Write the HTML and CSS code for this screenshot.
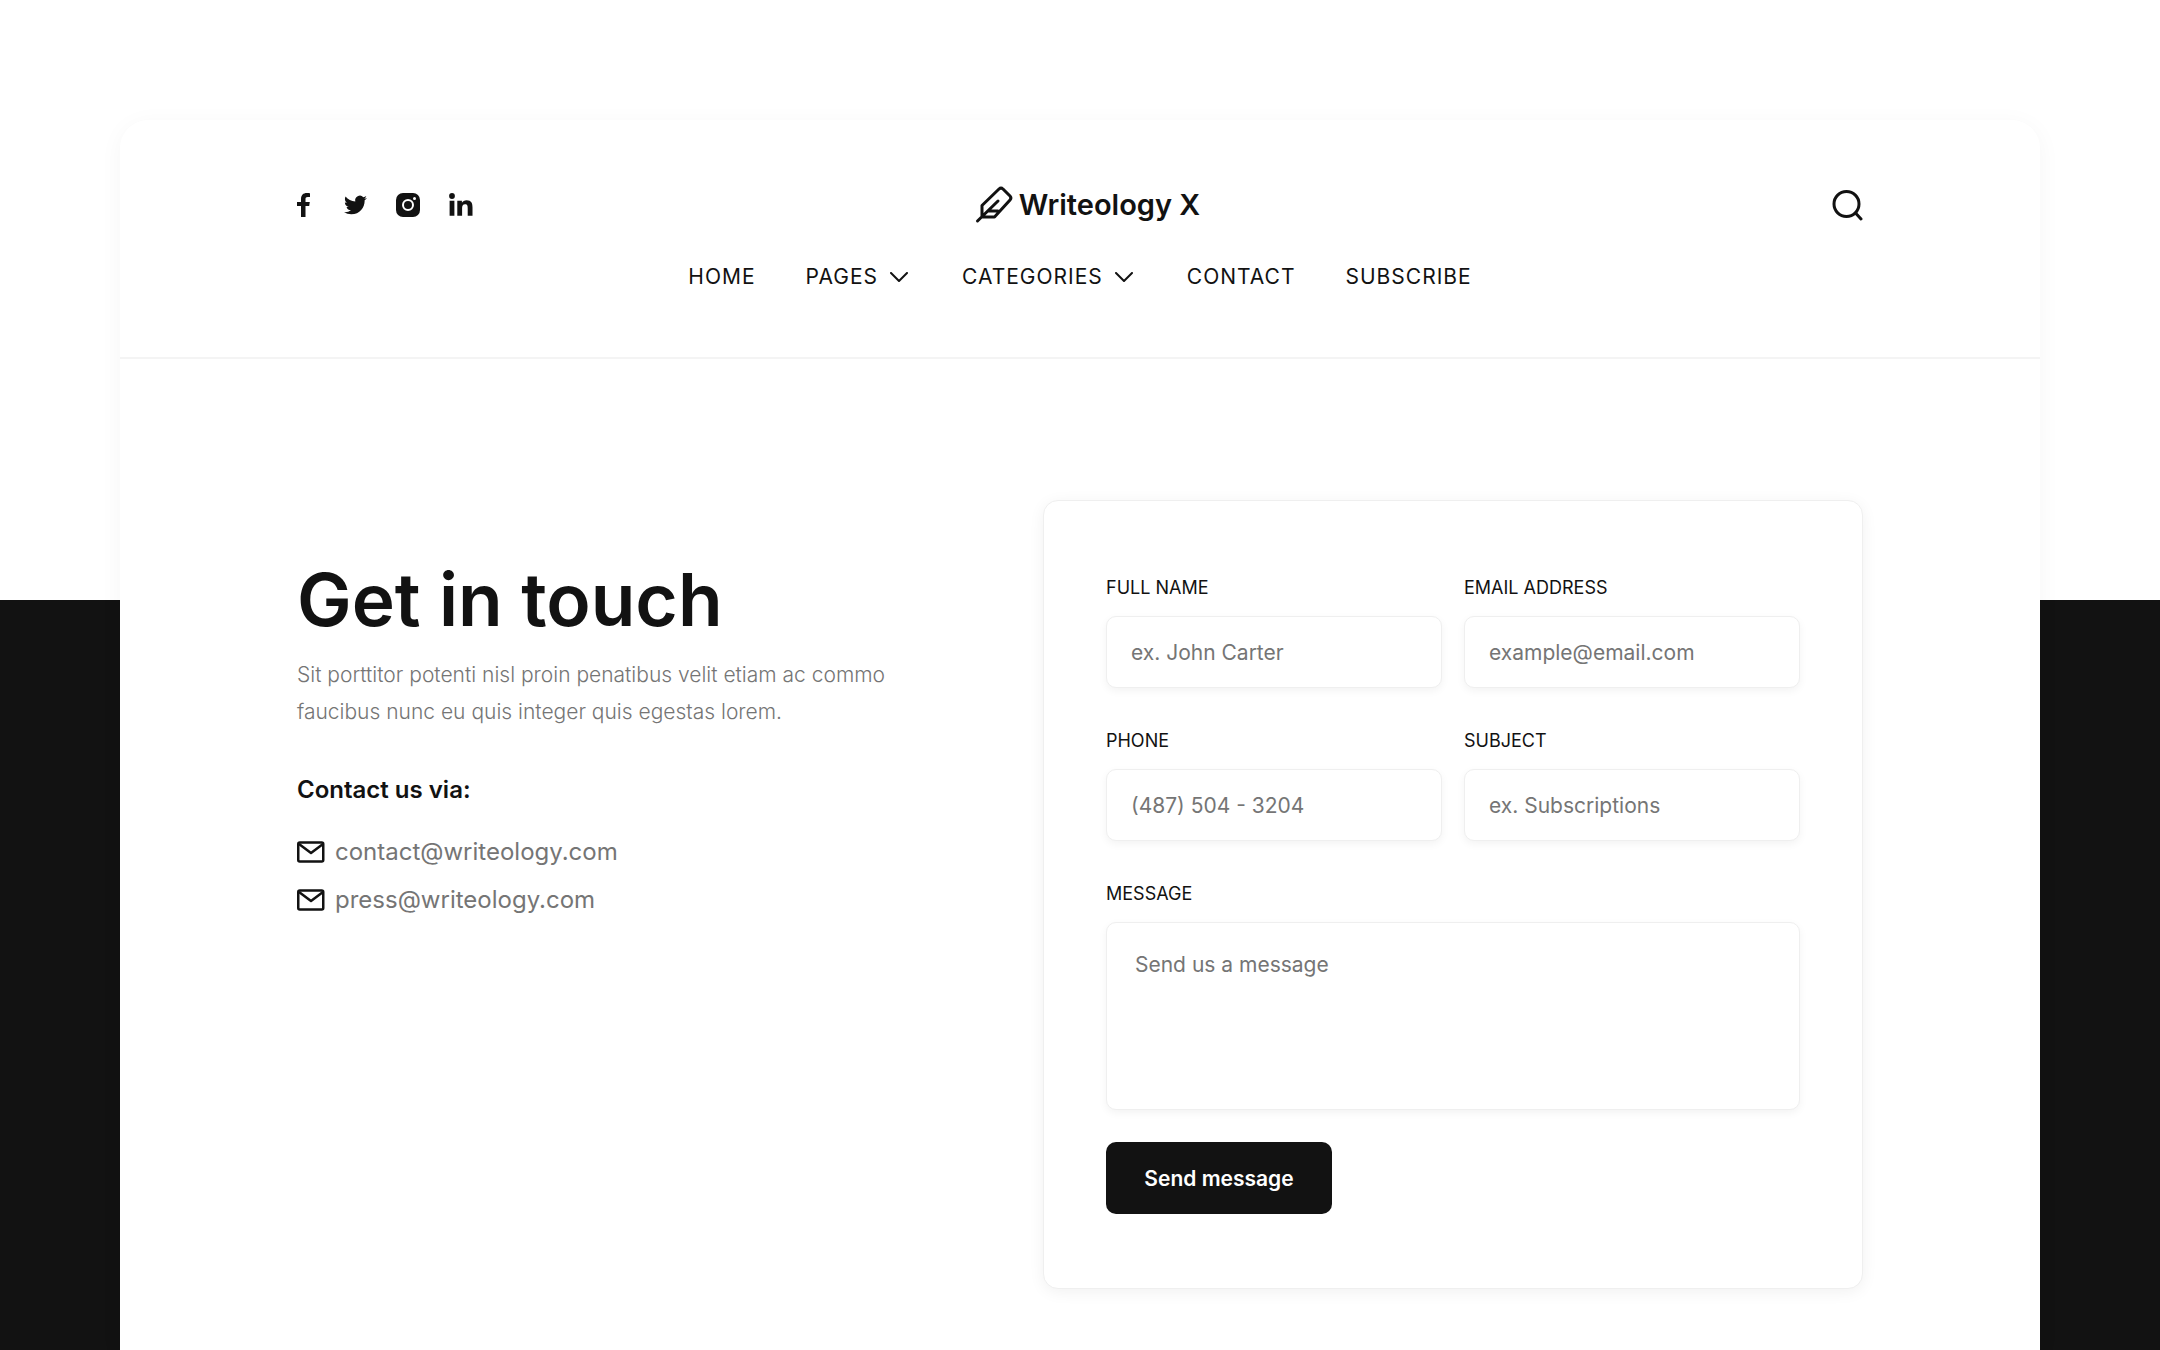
FILE: index.html
```html
<!DOCTYPE html>
<html lang="en">
  <head>
    <meta charset="UTF-8" />
    <meta name="viewport" content="width=device-width, initial-scale=1.0" />
    <title>Contact - Writeology X</title>
    <link rel="stylesheet" href="styles.css">
  </head>
  <body>
    <div class="page">
      <header class="header">
        <div class="header-top">
          <div class="social">
            <a href="#" aria-label="Facebook">
              <svg width="18" height="24" viewBox="0 0 18 24" fill="currentColor"><path d="M4 24V13H0V9h4V6.200C4 2 6.300 0 9.800 0c1.500 0 2.800.1 3.200.2v3.700h-2.200C9 3.900 8.500 4.700 8.500 6v3h4.300l-.6 4H8.500v11z"/></svg>
            </a>
            <a href="#" aria-label="Twitter">
              <svg width="23" height="24" viewBox="0 0 24 24" fill="currentColor"><path d="M23.950 4.570a10 10 0 0 1-2.820.78 4.960 4.960 0 0 0 2.160-2.730c-.95.56-2 .96-3.130 1.190a4.920 4.920 0 0 0-8.380 4.480C7.690 8.100 4.070 6.130 1.640 3.160a4.820 4.820 0 0 0-.67 2.480c0 1.710.87 3.210 2.190 4.100a4.900 4.900 0 0 1-2.230-.62v.06a4.920 4.920 0 0 0 3.950 4.830 5 5 0 0 1-2.210.08 4.940 4.940 0 0 0 4.600 3.420A9.870 9.870 0 0 1 0 19.540a13.990 13.990 0 0 0 7.550 2.210c9.050 0 14-7.500 14-13.980 0-.21 0-.42-.02-.63a9.940 9.940 0 0 0 2.420-2.570z"/></svg>
            </a>
            <a href="#" aria-label="Instagram">
              <svg width="24" height="24" viewBox="0 0 24 24"><rect width="24" height="24" rx="7" fill="currentColor"/><circle cx="12" cy="12" r="5" fill="none" stroke="#fff" stroke-width="2"/><circle cx="18.500" cy="5.500" r="1.500" fill="#fff"/></svg>
            </a>
            <a href="#" aria-label="LinkedIn">
              <svg width="24" height="24" viewBox="0 0 24 24" fill="currentColor"><circle cx="3" cy="3" r="2.900"/><path d="M.6 7.700h4.800v15H.6zM8.300 7.700h4.600v2.100c.9-1.500 2.500-2.500 4.700-2.500 4.800 0 5.900 3 5.900 7.200v8.200h-4.800v-7.300c0-2-.1-4.100-2.600-4.100s-3 1.900-3 4v7.400H8.300z"/></svg>
            </a>
          </div>
          <a href="#" class="logo">
            <svg width="40" height="40" viewBox="0 0 40 40" fill="none" stroke="currentColor" stroke-width="3" stroke-linecap="round" stroke-linejoin="round"><path d="M7 32V20.500L24 4q2-1.800 4 0l7 7q1.800 2 0 4L19.500 32zM2.500 36 23 16M13 26h10"/></svg>
            <span>Writeology X</span>
          </a>
          <button type="button" class="search-btn" aria-label="Search">
            <svg width="32" height="32" viewBox="0 0 32 32" fill="none" stroke="currentColor" stroke-width="3" stroke-linecap="round"><circle cx="15.500" cy="15" r="12.500"/><path d="m24.500 24 5.500 6"/></svg>
          </button>
        </div>
        <nav class="nav">
          <a href="#">HOME</a>
          <a href="#">PAGES
            <svg width="18" height="10" viewBox="0 0 18 10" fill="none" stroke="currentColor" stroke-width="2" stroke-linecap="round" stroke-linejoin="round"><path d="m1 1 8 8 8-8"/></svg>
          </a>
          <a href="#">CATEGORIES
            <svg width="18" height="10" viewBox="0 0 18 10" fill="none" stroke="currentColor" stroke-width="2" stroke-linecap="round" stroke-linejoin="round"><path d="m1 1 8 8 8-8"/></svg>
          </a>
          <a href="#">CONTACT</a>
          <a href="#">SUBSCRIBE</a>
        </nav>
      </header>
      <main class="contact">
        <section class="intro">
          <h1>Get in touch</h1>
          <p>Sit porttitor potenti nisl proin penatibus velit etiam ac commo<br>faucibus nunc eu quis integer quis egestas lorem.</p>
          <h2>Contact us via:</h2>
          <ul class="mails">
            <li>
              <a href="mailto:contact@writeology.com">
                <svg width="28" height="22" viewBox="0 0 28 22" fill="none" stroke="currentColor" stroke-width="2.500" stroke-linejoin="round"><rect x="1.250" y="1.500" width="25" height="19" rx="1.500"/><path d="m2 3 12 9 12-9"/></svg>
                contact@writeology.com
              </a>
            </li>
            <li>
              <a href="mailto:press@writeology.com">
                <svg width="28" height="22" viewBox="0 0 28 22" fill="none" stroke="currentColor" stroke-width="2.500" stroke-linejoin="round"><rect x="1.250" y="1.500" width="25" height="19" rx="1.500"/><path d="m2 3 12 9 12-9"/></svg>
                press@writeology.com
              </a>
            </li>
          </ul>
        </section>
        <form class="contact-form">
          <div class="field">
            <label for="fullname">FULL NAME</label>
            <input type="text" id="fullname" placeholder="ex. John Carter" />
          </div>
          <div class="field">
            <label for="email">EMAIL ADDRESS</label>
            <input type="email" id="email" placeholder="example@email.com" />
          </div>
          <div class="field">
            <label for="phone">PHONE</label>
            <input type="tel" id="phone" placeholder="(487) 504 - 3204" />
          </div>
          <div class="field">
            <label for="subject">SUBJECT</label>
            <input type="text" id="subject" placeholder="ex. Subscriptions" />
          </div>
          <div class="field wide">
            <label for="message">MESSAGE</label>
            <textarea id="message" placeholder="Send us a message"></textarea>
          </div>
          <button type="submit" class="send-btn">Send message</button>
        </form>
      </main>
    </div>
  </body>
</html>
```
FILE: styles.css
```css
* {
  box-sizing: border-box;
}

body {
  margin: 0;
  padding: 120px 120px 0;
  min-height: 100vh;
  font-family: Inter, "Open Sans", sans-serif;
  color: #121212;
  background: linear-gradient(#fff 600px, #121212 600px);
}

a {
  color: inherit;
  text-decoration: none;
}

svg {
  display: block;
  flex-shrink: 0;
}

.page {
  min-height: calc(100vh - 120px);
  background-color: #fff;
  border-radius: 28px 28px 0 0;
  box-shadow: 0 4px 24px rgba(0, 0, 0, 0.04);
}

.header {
  padding: 65px 177px 64px;
  border-bottom: 2px solid #f4f4f4;
}

.header-top {
  display: grid;
  grid-template-columns: 1fr auto 1fr;
  align-items: center;
}

.social {
  display: flex;
  align-items: center;
  gap: 29px;
}

.logo {
  display: flex;
  align-items: center;
  gap: 4px;
  padding-left: 15px;
  font-size: 29px;
  line-height: 40px;
  font-weight: 600;
}

.search-btn {
  justify-self: end;
  padding: 0;
  border: none;
  background: none;
  color: inherit;
  cursor: pointer;
}

.nav {
  display: flex;
  justify-content: center;
  gap: 50px;
  margin-top: 36px;
  font-size: 21px;
  line-height: 32px;
  letter-spacing: 1px;
}

.nav a {
  display: flex;
  align-items: center;
  gap: 12px;
}

.nav svg {
  margin-right: 4px;
}

.contact {
  display: flex;
  justify-content: space-between;
  align-items: flex-start;
  gap: 60px;
  padding: 141px 177px 62px;
}

.intro {
  padding-top: 56px;
}

h1 {
  margin: 0 0 12px;
  font-size: 73px;
  line-height: 88px;
  font-weight: 600;
}

.intro p {
  margin: 0 0 44px;
  font-size: 21px;
  line-height: 37px;
  font-weight: 300;
  color: #757575;
}

h2 {
  margin: 0 0 22px;
  font-size: 24px;
  line-height: 32px;
  font-weight: 600;
}

.mails {
  margin: 0;
  padding: 0;
  list-style: none;
}

.mails a {
  display: flex;
  align-items: center;
  gap: 10px;
  font-size: 24px;
  line-height: 48px;
  color: #757575;
}

.mails svg {
  color: #121212;
}

.contact-form {
  display: grid;
  grid-template-columns: 1fr 1fr;
  gap: 32px 22px;
  width: 820px;
  padding: 66px 62px 74px;
  border: 1px solid #efefef;
  border-radius: 15px;
  background-color: #fff;
  box-shadow: 0 3px 16px rgba(0, 0, 0, 0.06);
}

.wide {
  grid-column: 1 / -1;
}

label {
  display: block;
  margin-bottom: 8px;
  font-size: 18px;
  line-height: 41px;
}

input,
textarea {
  display: block;
  width: 100%;
  padding: 0 24px;
  border: 1px solid #efefef;
  border-radius: 10px;
  background-color: #fff;
  box-shadow: 0 3px 8px rgba(0, 0, 0, 0.05);
  color: #121212;
  font-family: inherit;
  font-size: 21px;
}

input {
  height: 72px;
}

textarea {
  height: 188px;
  padding: 26px 28px;
  line-height: 32px;
  resize: none;
}

input::placeholder,
textarea::placeholder {
  color: #757575;
  opacity: 1;
}

.send-btn {
  justify-self: start;
  width: 226px;
  height: 72px;
  border: none;
  border-radius: 10px;
  background-color: #121212;
  color: #fff;
  font-family: inherit;
  font-size: 21px;
  font-weight: 600;
  cursor: pointer;
}
```
